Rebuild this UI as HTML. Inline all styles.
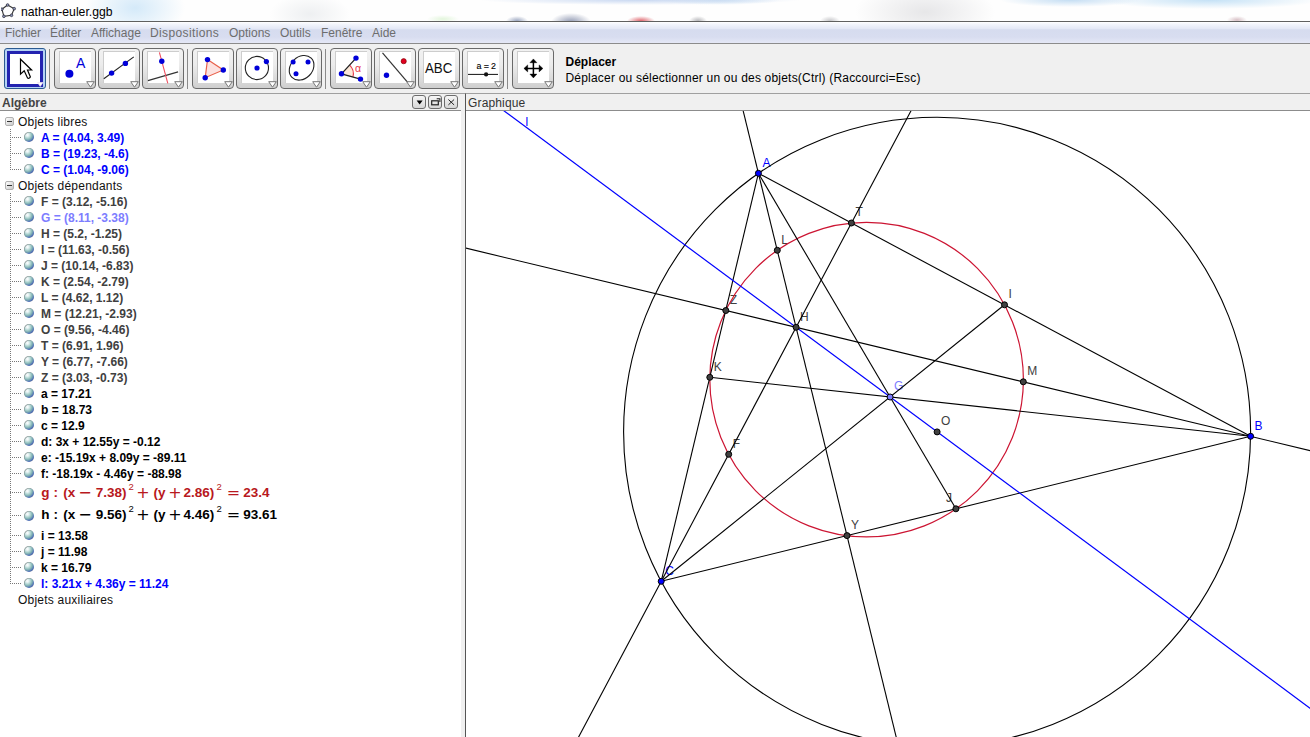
<!DOCTYPE html>
<html lang="fr"><head><meta charset="utf-8"><title>nathan-euler.ggb</title>
<style>
html,body{margin:0;padding:0}
body{width:1310px;height:737px;overflow:hidden;position:relative;background:#fff;font-family:"Liberation Sans",Arial,sans-serif;font-size:12px;color:#000}
div,span{box-sizing:border-box}
#title{position:absolute;left:0;top:0;width:1310px;height:21px;overflow:hidden;background:
radial-gradient(ellipse 11px 5px at 517px 21px,rgba(120,135,170,.75),transparent),
radial-gradient(ellipse 20px 9px at 571px 22px,rgba(125,135,165,.85),transparent),
radial-gradient(ellipse 14px 5px at 641px 21px,rgba(215,60,70,.8),transparent),
radial-gradient(ellipse 9px 5px at 698px 21px,rgba(150,150,155,.7),transparent),
radial-gradient(ellipse 10px 5px at 830px 21px,rgba(160,160,165,.6),transparent),
radial-gradient(ellipse 16px 4px at 443px 19px,rgba(215,242,205,.7),transparent),
radial-gradient(ellipse 10px 4px at 1237px 20px,rgba(190,150,160,.6),transparent),
radial-gradient(ellipse 160px 5px at 640px 0px,rgba(195,212,240,.9),transparent),
radial-gradient(ellipse 70px 7px at 1070px 0px,rgba(190,218,242,.9),transparent),
radial-gradient(ellipse 110px 9px at 1210px 0px,rgba(190,222,245,.9),transparent),
radial-gradient(ellipse 60px 5px at 720px 0px,rgba(190,218,242,.7),transparent),
radial-gradient(ellipse 50px 30px at 135px 8px,rgba(205,230,248,.85),transparent),
radial-gradient(ellipse 70px 30px at 925px 12px,rgba(228,228,230,.9),transparent),
radial-gradient(ellipse 40px 20px at 310px 14px,rgba(236,238,240,.9),transparent),
#fefefe}
#title span{position:absolute;left:21px;top:4.7px;font-size:12.2px;color:#000;line-height:15px}
#logo{position:absolute;left:1px;top:3px}
#menu{position:absolute;left:0;top:21px;width:1310px;height:23px;border-top:1px solid #606060;border-bottom:1px solid #8c8c8c;background:linear-gradient(#ffffff 0%,#f3f5fc 10%,#e4e8f6 31%,#d6dcef 37%,#d8ddf0 72%,#e5e8f6 100%)}
#menu span{position:absolute;top:4px;font-size:12px;line-height:15px;color:#6d6d6d}
#toolbar{position:absolute;left:0;top:44px;width:1310px;height:49px;background:#f0f0f0}
#tt1{position:absolute;left:565.5px;top:11px;font-weight:bold;font-size:12px;line-height:15px;color:#000}
#tt2{position:absolute;left:565.5px;top:27px;letter-spacing:0.2px;font-size:12px;line-height:15px;color:#000}
.tb{position:absolute;top:4px;width:42px;height:41px;border:1px solid #6a6a6a;border-radius:4px;background:linear-gradient(#f2f2f2 0%,#ececec 40%,#cfcfcf 100%)}
.tb .in{position:absolute;left:3.5px;top:2px;width:32.3px;height:32.3px;background:#fff;border-left:1px solid #cdcdcd;border-top:1px solid #cdcdcd}
.tb .ic{position:absolute;left:4px;top:3px}
.tb .tri{position:absolute;left:31px;top:31.5px}
.tb.sel{border:1px solid #2c5a90;border-radius:3px;background:#b4d2f4}
.tb.sel:before{content:"";position:absolute;left:1.6px;top:1.9px;width:36.6px;height:35.7px;background:#2323b0}
.tb.sel .tri{left:32.3px;top:32.6px;width:6.5px;height:5px}
.tb.sel .tri path{stroke:#f0e0ec}
.tb.sel .in{left:4.8px;top:4.8px;width:30.4px;height:30px;border:none;background:#fff}
.tsep{position:absolute;top:5px;width:1px;height:40px;background:#8a8a8a}
#hdrL{position:absolute;left:0;top:93px;width:461px;height:18px;border-top:1px solid #a0a0a0;border-bottom:1px solid #8c8c8c;background:#f0f0f0;font-size:12px;line-height:16px;color:#444;padding-left:2px}
#hdrL b{position:absolute;left:2px;top:1px}
#hdrR{position:absolute;left:466px;top:93px;width:844px;height:18px;letter-spacing:0.15px;border-top:1px solid #a0a0a0;border-bottom:1px solid #8c8c8c;background:#f0f0f0;font-size:12px;line-height:16px;color:#333;padding-left:2px;padding-top:1px}
.hb{position:absolute;top:1.2px;width:13.4px;height:13.4px;border:1px solid #6c6c6c;border-radius:3px;background:linear-gradient(#f6f6f6,#d6d6d6)}
.hb svg{position:absolute;left:-0.6px;top:-0.2px}
#split{position:absolute;left:461px;top:93px;width:5px;height:644px;background:#f0f0f0;border-right:1px solid #555;border-top:1px solid #a0a0a0}
#alg{position:absolute;left:0;top:0;width:461px;height:737px;overflow:hidden;pointer-events:none}
#gfx{position:absolute;left:466px;top:111px;width:844px;height:626px;background:#fff}
.cat{position:absolute;left:18px;height:16px;line-height:16px;letter-spacing:0.22px;margin-top:1px;font-size:12px;color:#111;white-space:nowrap}
.it{position:absolute;left:41px;height:16px;line-height:16px;margin-top:1px;font-size:12px;font-weight:bold;white-space:nowrap}
.mi{position:absolute;left:41px;font-family:"DejaVu Sans","Liberation Sans",sans-serif;font-size:12px;font-weight:bold;white-space:nowrap;letter-spacing:0.3px}
.mi sup{font-size:8px;vertical-align:6px;line-height:0}
.pm{position:absolute;left:5px;width:9px;height:9px;border:1px solid #b0b0b0;border-radius:2px;background:linear-gradient(135deg,#fff,#c8c8c8)}
.pm:after{content:"";position:absolute;left:1px;top:3px;width:5px;height:1px;background:#333}
.vd{position:absolute;left:10px;width:0;border-left:1px dotted #777}
.hd{position:absolute;left:10px;width:11px;height:0;border-top:1px dotted #777}
.ball{position:absolute;left:24px;width:10px;height:10px;border-radius:50%;background:radial-gradient(circle 7.5px at 34% 30%,#ffffff 0%,#e2f0f0 20%,#a2ccc8 48%,#78a8b0 68%,#4e6eb8 90%,#5a6a90 100%);box-shadow:inset 0.6px 0.6px 0 0 rgba(110,110,110,0.6)}

</style></head><body>
<div id="title"><svg id="logo" width="16" height="16" viewBox="0 0 16 16"><path d="M6.6 2L13.2 5.7L10.5 12.3L2.9 13.3L0.9 6.2Z" fill="none" stroke="#333" stroke-width="1.1"/><g fill="#8c94b4" stroke="#2a2a3a" stroke-width="0.7"><circle cx="6.6" cy="2" r="1.35"/><circle cx="13.2" cy="5.7" r="1.35"/><circle cx="10.5" cy="12.3" r="1.35"/><circle cx="2.9" cy="13.3" r="1.35"/><circle cx="0.9" cy="6.2" r="1.35"/></g></svg><span>nathan-euler.ggb</span></div>
<div id="menu"><span style="left:5px">Fichier</span><span style="left:50px">Éditer</span><span style="left:91px">Affichage</span><span style="left:150px;letter-spacing:0.38px">Dispositions</span><span style="left:229px">Options</span><span style="left:280px">Outils</span><span style="left:321px">Fenêtre</span><span style="left:372px">Aide</span></div>
<div id="toolbar">
<div class="tb sel" style="left:4px"><div class="in"></div><svg class="ic" width="32" height="32" viewBox="0 0 32 32"><path d="M11.5 7.2V22.2L15.2 18.8L18.5 25.9Q20 27 21.4 24.9L18.5 18H22.6Z" fill="#fff" stroke="#000" stroke-width="1.2" stroke-linejoin="miter"/></svg><svg class="tri" width="9" height="7" viewBox="0 0 9 7"><path d="M0.7 0.7H8.3L4.5 6.2Z" fill="#fff" stroke="#777" stroke-width="1"/></svg></div>
<div class="tb" style="left:54px"><div class="in"></div><svg class="ic" width="32" height="32" viewBox="0 0 32 32"><circle cx="10.4" cy="21.8" r="4" fill="#0000d8"/><text x="17" y="16.1" font-family="Liberation Sans, Arial, sans-serif" font-size="14" fill="#0000d8">A</text></svg><svg class="tri" width="9" height="7" viewBox="0 0 9 7"><path d="M0.7 0.7H8.3L4.5 6.2Z" fill="#fff" stroke="#777" stroke-width="1"/></svg></div>
<div class="tb" style="left:98px"><div class="in"></div><svg class="ic" width="32" height="32" viewBox="0 0 32 32"><path d="M0.8 26.8L30.8 4.9" stroke="#222" stroke-width="1.1"/><circle cx="8.6" cy="21.1" r="2.7" fill="#0000d8"/><circle cx="22.4" cy="11.4" r="2.7" fill="#0000d8"/></svg><svg class="tri" width="9" height="7" viewBox="0 0 9 7"><path d="M0.7 0.7H8.3L4.5 6.2Z" fill="#fff" stroke="#777" stroke-width="1"/></svg></div>
<div class="tb" style="left:142px"><div class="in"></div><svg class="ic" width="32" height="32" viewBox="0 0 32 32"><path d="M0.9 28.6L31.1 19.9" stroke="#333" stroke-width="1.1"/><path d="M12.4 0.4L20.8 31.3" stroke="#f05060" stroke-width="1.1"/><circle cx="14.8" cy="9.2" r="2.7" fill="#0000d8"/></svg><svg class="tri" width="9" height="7" viewBox="0 0 9 7"><path d="M0.7 0.7H8.3L4.5 6.2Z" fill="#fff" stroke="#777" stroke-width="1"/></svg></div>
<div class="tb" style="left:192px"><div class="in"></div><svg class="ic" width="32" height="32" viewBox="0 0 32 32"><path d="M10.5 7.6L26.3 18L8.2 25.7Z" fill="#fce2e0" stroke="#e8604a" stroke-width="1.15"/><circle cx="10.5" cy="7.6" r="2.7" fill="#0000d8"/><circle cx="26.3" cy="18" r="2.7" fill="#0000d8"/><circle cx="8.2" cy="25.7" r="2.7" fill="#0000d8"/></svg><svg class="tri" width="9" height="7" viewBox="0 0 9 7"><path d="M0.7 0.7H8.3L4.5 6.2Z" fill="#fff" stroke="#777" stroke-width="1"/></svg></div>
<div class="tb" style="left:236px"><div class="in"></div><svg class="ic" width="32" height="32" viewBox="0 0 32 32"><circle cx="15.9" cy="16" r="11.6" fill="none" stroke="#222" stroke-width="1.1"/><circle cx="16" cy="16" r="2.6" fill="#0000d8"/><circle cx="25.4" cy="9.6" r="2.6" fill="#0000d8"/></svg><svg class="tri" width="9" height="7" viewBox="0 0 9 7"><path d="M0.7 0.7H8.3L4.5 6.2Z" fill="#fff" stroke="#777" stroke-width="1"/></svg></div>
<div class="tb" style="left:280px"><div class="in"></div><svg class="ic" width="32" height="32" viewBox="0 0 32 32"><ellipse cx="16.6" cy="15.8" rx="13.6" ry="10.9" transform="rotate(-45 16.6 15.8)" fill="none" stroke="#222" stroke-width="1.1"/><circle cx="8.1" cy="9.9" r="2.5" fill="#0000d8"/><circle cx="23" cy="9.9" r="2.5" fill="#0000d8"/><circle cx="11" cy="21.8" r="2.5" fill="#0000d8"/></svg><svg class="tri" width="9" height="7" viewBox="0 0 9 7"><path d="M0.7 0.7H8.3L4.5 6.2Z" fill="#fff" stroke="#777" stroke-width="1"/></svg></div>
<div class="tb" style="left:330px"><div class="in"></div><svg class="ic" width="32" height="32" viewBox="0 0 32 32"><path d="M6.5 21.8L14.6 13.1A11.8 11.8 0 0 1 17.9 24.8Z" fill="#fde8d8" stroke="none"/><path d="M14.6 13.1A11.8 11.8 0 0 1 17.9 24.8" fill="none" stroke="#e83848" stroke-width="1.1"/><path d="M21 6.1L6.5 21.8L25.5 27.1" fill="none" stroke="#222" stroke-width="1.3"/><circle cx="21" cy="6.1" r="2.7" fill="#0000d8"/><circle cx="6.5" cy="21.8" r="2.7" fill="#0000d8"/><circle cx="25.5" cy="27.1" r="2.7" fill="#0000d8"/><text x="20" y="19.6" font-family="Liberation Sans, Arial, sans-serif" font-size="10.5" fill="#e83848">α</text></svg><svg class="tri" width="9" height="7" viewBox="0 0 9 7"><path d="M0.7 0.7H8.3L4.5 6.2Z" fill="#fff" stroke="#777" stroke-width="1"/></svg></div>
<div class="tb" style="left:374px"><div class="in"></div><svg class="ic" width="32" height="32" viewBox="0 0 32 32"><path d="M3.5 0.8L29.1 30.9" stroke="#333" stroke-width="1.2"/><circle cx="24.7" cy="9.2" r="2.6" fill="#e00020" stroke="#700" stroke-width="0.6"/><circle cx="7.5" cy="23.3" r="2.7" fill="#0000d8"/></svg><svg class="tri" width="9" height="7" viewBox="0 0 9 7"><path d="M0.7 0.7H8.3L4.5 6.2Z" fill="#fff" stroke="#777" stroke-width="1"/></svg></div>
<div class="tb" style="left:418px"><div class="in"></div><svg class="ic" width="32" height="32" viewBox="0 0 32 32"><text x="1.9" y="20.9" font-family="Liberation Sans, Arial, sans-serif" font-size="13.9" fill="#111" textLength="27.4" lengthAdjust="spacingAndGlyphs">ABC</text></svg><svg class="tri" width="9" height="7" viewBox="0 0 9 7"><path d="M0.7 0.7H8.3L4.5 6.2Z" fill="#fff" stroke="#777" stroke-width="1"/></svg></div>
<div class="tb" style="left:462px"><div class="in"></div><svg class="ic" width="32" height="32" viewBox="0 0 32 32"><g font-family="Liberation Sans, Arial, sans-serif" font-size="8.9" fill="#000" stroke="#000" stroke-width="0.12"><text x="9.4" y="16.8">a</text><text x="16.8" y="16.5">=</text><text x="24" y="16.8">2</text></g><path d="M1 22.4H31" stroke="#111" stroke-width="1"/><circle cx="19.1" cy="22.4" r="2.1" fill="#111"/></svg><svg class="tri" width="9" height="7" viewBox="0 0 9 7"><path d="M0.7 0.7H8.3L4.5 6.2Z" fill="#fff" stroke="#777" stroke-width="1"/></svg></div>
<div class="tb" style="left:512px"><div class="in"></div><svg class="ic" width="32" height="32" viewBox="0 0 32 32"><g stroke="#000" stroke-width="1.5" fill="#000"><path d="M16.4 9V24M9 16.4H24"/><path d="M16.4 6.9L12.9 10.7H19.9Z M16.4 25.9L12.9 22.1H19.9Z M6.9 16.4L10.7 12.9V19.9Z M25.9 16.4L22.1 12.9V19.9Z" stroke-width="0.4"/></g></svg><svg class="tri" width="9" height="7" viewBox="0 0 9 7"><path d="M0.7 0.7H8.3L4.5 6.2Z" fill="#fff" stroke="#777" stroke-width="1"/></svg></div>
<div class="tsep" style="left:49px"></div>
<div class="tsep" style="left:187px"></div>
<div class="tsep" style="left:325px"></div>
<div class="tsep" style="left:507px"></div>
<div id="tt1">Déplacer</div><div id="tt2">Déplacer ou sélectionner un ou des objets(Ctrl) (Raccourci=Esc)</div>
</div>
<div id="hdrL"><b>Algèbre</b>
<div class="hb" style="left:412.2px"><svg width="14" height="14" viewBox="0 0 14 14"><path d="M3.6 4.4H9.6L6.6 8.4Z" fill="#000"/></svg></div>
<div class="hb" style="left:428.3px"><svg width="14" height="14" viewBox="0 0 14 14"><path d="M7.7 2.7H10.9V5.9" fill="none" stroke="#222" stroke-width="1.1"/><rect x="2.7" y="4.8" width="6.6" height="4" fill="none" stroke="#222" stroke-width="1.2"/></svg></div>
<div class="hb" style="left:444.2px"><svg width="14" height="14" viewBox="0 0 14 14"><path d="M3.4 3.5L9.1 8.9M9.1 3.5L3.4 8.9" stroke="#222" stroke-width="1" fill="none"/></svg></div>
</div>
<div id="hdrR">Graphique</div>
<div id="alg">
<div class="pm" style="top:117px"></div><div class="cat" style="top:113px">Objets libres</div>
<div class="hd" style="top:137px"></div><div class="ball" style="top:132px"></div><div class="it" style="top:129px;color:#0000ff">A = (4.04, 3.49)</div>
<div class="hd" style="top:153px"></div><div class="ball" style="top:148px"></div><div class="it" style="top:145px;color:#0000ff">B = (19.23, -4.6)</div>
<div class="hd" style="top:169px"></div><div class="ball" style="top:164px"></div><div class="it" style="top:161px;color:#0000ff">C = (1.04, -9.06)</div>
<div class="vd" style="top:129px;height:41px"></div>
<div class="pm" style="top:181px"></div><div class="cat" style="top:177px">Objets dépendants</div>
<div class="hd" style="top:201px"></div><div class="ball" style="top:196px"></div><div class="it" style="top:193px;color:#404040">F = (3.12, -5.16)</div>
<div class="hd" style="top:217px"></div><div class="ball" style="top:212px"></div><div class="it" style="top:209px;color:#7d7dff">G = (8.11, -3.38)</div>
<div class="hd" style="top:233px"></div><div class="ball" style="top:228px"></div><div class="it" style="top:225px;color:#404040">H = (5.2, -1.25)</div>
<div class="hd" style="top:249px"></div><div class="ball" style="top:244px"></div><div class="it" style="top:241px;color:#404040">I = (11.63, -0.56)</div>
<div class="hd" style="top:265px"></div><div class="ball" style="top:260px"></div><div class="it" style="top:257px;color:#404040">J = (10.14, -6.83)</div>
<div class="hd" style="top:281px"></div><div class="ball" style="top:276px"></div><div class="it" style="top:273px;color:#404040">K = (2.54, -2.79)</div>
<div class="hd" style="top:297px"></div><div class="ball" style="top:292px"></div><div class="it" style="top:289px;color:#404040">L = (4.62, 1.12)</div>
<div class="hd" style="top:313px"></div><div class="ball" style="top:308px"></div><div class="it" style="top:305px;color:#404040">M = (12.21, -2.93)</div>
<div class="hd" style="top:329px"></div><div class="ball" style="top:324px"></div><div class="it" style="top:321px;color:#404040">O = (9.56, -4.46)</div>
<div class="hd" style="top:345px"></div><div class="ball" style="top:340px"></div><div class="it" style="top:337px;color:#404040">T = (6.91, 1.96)</div>
<div class="hd" style="top:361px"></div><div class="ball" style="top:356px"></div><div class="it" style="top:353px;color:#404040">Y = (6.77, -7.66)</div>
<div class="hd" style="top:377px"></div><div class="ball" style="top:372px"></div><div class="it" style="top:369px;color:#404040">Z = (3.03, -0.73)</div>
<div class="hd" style="top:393px"></div><div class="ball" style="top:388px"></div><div class="it" style="top:385px;color:#000">a = 17.21</div>
<div class="hd" style="top:409px"></div><div class="ball" style="top:404px"></div><div class="it" style="top:401px;color:#000">b = 18.73</div>
<div class="hd" style="top:425px"></div><div class="ball" style="top:420px"></div><div class="it" style="top:417px;color:#000">c = 12.9</div>
<div class="hd" style="top:441px"></div><div class="ball" style="top:436px"></div><div class="it" style="top:433px;color:#000">d: 3x + 12.55y = -0.12</div>
<div class="hd" style="top:457px"></div><div class="ball" style="top:452px"></div><div class="it" style="top:449px;color:#000">e: -15.19x + 8.09y = -89.11</div>
<div class="hd" style="top:473px"></div><div class="ball" style="top:468px"></div><div class="it" style="top:465px;color:#000">f: -18.19x - 4.46y = -88.98</div>
<div class="hd" style="top:492px"></div><div class="ball" style="top:487.5px"></div><span style="position:absolute;left:41.2px;top:482.8px;white-space:nowrap;color:#b81820;font:bold 13.5px 'Liberation Sans',Arial,sans-serif;line-height:20px">g</span><span style="position:absolute;left:53.4px;top:482.8px;white-space:nowrap;color:#b81820;font:bold 13.5px 'Liberation Sans',Arial,sans-serif;line-height:20px">:</span><span style="position:absolute;left:63.3px;top:482.8px;white-space:nowrap;color:#b81820;font:bold 13.5px 'Liberation Sans',Arial,sans-serif;line-height:20px">(x</span><span style="position:absolute;left:78.3px;top:482.9px;white-space:nowrap;color:#b81820;font:16px 'DejaVu Sans',sans-serif;line-height:20px">&minus;</span><span style="position:absolute;left:95.8px;top:482.8px;white-space:nowrap;color:#b81820;font:bold 13.5px 'Liberation Sans',Arial,sans-serif;line-height:20px">7.38)</span><span style="position:absolute;left:128.6px;top:476.6px;white-space:nowrap;color:#b81820;font:9.5px 'Liberation Sans',Arial,sans-serif;line-height:20px">2</span><span style="position:absolute;left:136.2px;top:482.9px;white-space:nowrap;color:#b81820;font:16px 'DejaVu Sans',sans-serif;line-height:20px">+</span><span style="position:absolute;left:153.4px;top:482.8px;white-space:nowrap;color:#b81820;font:bold 13.5px 'Liberation Sans',Arial,sans-serif;line-height:20px">(y</span><span style="position:absolute;left:168.3px;top:482.9px;white-space:nowrap;color:#b81820;font:16px 'DejaVu Sans',sans-serif;line-height:20px">+</span><span style="position:absolute;left:183.4px;top:482.8px;white-space:nowrap;color:#b81820;font:bold 13.5px 'Liberation Sans',Arial,sans-serif;line-height:20px">2.86)</span><span style="position:absolute;left:216.4px;top:476.6px;white-space:nowrap;color:#b81820;font:9.5px 'Liberation Sans',Arial,sans-serif;line-height:20px">2</span><span style="position:absolute;left:226.7px;top:482.9px;white-space:nowrap;color:#b81820;font:16px 'DejaVu Sans',sans-serif;line-height:20px">=</span><span style="position:absolute;left:243.2px;top:482.8px;white-space:nowrap;color:#b81820;font:bold 13.5px 'Liberation Sans',Arial,sans-serif;line-height:20px">23.4</span>
<div class="hd" style="top:515px"></div><div class="ball" style="top:510.5px"></div><span style="position:absolute;left:41.2px;top:505.0px;white-space:nowrap;color:#000;font:bold 13.5px 'Liberation Sans',Arial,sans-serif;line-height:20px">h</span><span style="position:absolute;left:53.4px;top:505.0px;white-space:nowrap;color:#000;font:bold 13.5px 'Liberation Sans',Arial,sans-serif;line-height:20px">:</span><span style="position:absolute;left:63.3px;top:505.0px;white-space:nowrap;color:#000;font:bold 13.5px 'Liberation Sans',Arial,sans-serif;line-height:20px">(x</span><span style="position:absolute;left:78.3px;top:505.1px;white-space:nowrap;color:#000;font:16px 'DejaVu Sans',sans-serif;line-height:20px">&minus;</span><span style="position:absolute;left:95.8px;top:505.0px;white-space:nowrap;color:#000;font:bold 13.5px 'Liberation Sans',Arial,sans-serif;line-height:20px">9.56)</span><span style="position:absolute;left:128.6px;top:498.8px;white-space:nowrap;color:#000;font:9.5px 'Liberation Sans',Arial,sans-serif;line-height:20px">2</span><span style="position:absolute;left:136.2px;top:505.1px;white-space:nowrap;color:#000;font:16px 'DejaVu Sans',sans-serif;line-height:20px">+</span><span style="position:absolute;left:153.4px;top:505.0px;white-space:nowrap;color:#000;font:bold 13.5px 'Liberation Sans',Arial,sans-serif;line-height:20px">(y</span><span style="position:absolute;left:168.3px;top:505.1px;white-space:nowrap;color:#000;font:16px 'DejaVu Sans',sans-serif;line-height:20px">+</span><span style="position:absolute;left:183.4px;top:505.0px;white-space:nowrap;color:#000;font:bold 13.5px 'Liberation Sans',Arial,sans-serif;line-height:20px">4.46)</span><span style="position:absolute;left:216.4px;top:498.8px;white-space:nowrap;color:#000;font:9.5px 'Liberation Sans',Arial,sans-serif;line-height:20px">2</span><span style="position:absolute;left:226.7px;top:505.1px;white-space:nowrap;color:#000;font:16px 'DejaVu Sans',sans-serif;line-height:20px">=</span><span style="position:absolute;left:243.2px;top:505.0px;white-space:nowrap;color:#000;font:bold 13.5px 'Liberation Sans',Arial,sans-serif;line-height:20px">93.61</span>
<div class="hd" style="top:535px"></div><div class="ball" style="top:530px"></div><div class="it" style="top:527px;color:#000">i = 13.58</div>
<div class="hd" style="top:551px"></div><div class="ball" style="top:546px"></div><div class="it" style="top:543px;color:#000">j = 11.98</div>
<div class="hd" style="top:567px"></div><div class="ball" style="top:562px"></div><div class="it" style="top:559px;color:#000">k = 16.79</div>
<div class="hd" style="top:583px"></div><div class="ball" style="top:578px"></div><div class="it" style="top:575px;color:#0000ff">l: 3.21x + 4.36y = 11.24</div>
<div class="vd" style="top:193px;height:391px"></div>
<div class="cat" style="top:591px">Objets auxiliaires</div>
</div>
<div id="split"></div>
<div id="gfx"></div>
<svg width="844" height="626" viewBox="466 111 844 626" style="position:absolute;left:466px;top:111px"><g font-family="Liberation Sans, Arial, sans-serif" font-size="12"><text x="762.4" y="166.6" fill="#0000ff">A</text><text x="1254.6" y="429.6" fill="#0000ff">B</text><text x="665.2" y="574.6" fill="#0000ff">C</text><text x="941.1" y="425.2" fill="#404040">O</text><text x="894.1" y="390.3" fill="#7d7dff">G</text><text x="800.1" y="320.6" fill="#404040">H</text><text x="1008.5" y="298.1" fill="#404040">I</text><text x="946.1" y="502.0" fill="#404040">J</text><text x="713.8" y="370.6" fill="#404040">K</text><text x="781.3" y="243.6" fill="#404040">L</text><text x="1027.3" y="375.1" fill="#404040">M</text><text x="732.7" y="447.6" fill="#404040">F</text><text x="855.4" y="216.3" fill="#404040">T</text><text x="851.0" y="528.9" fill="#404040">Y</text><text x="729.8" y="303.8" fill="#404040">Z</text><text x="525.5" y="126" fill="#0000ff">l</text></g>
<ellipse cx="937.1" cy="431.9" rx="313.5" ry="314.6" fill="none" stroke="#000" stroke-width="1.1"/>
<ellipse cx="866.6" cy="379.6" rx="156.8" ry="157.3" fill="none" stroke="#cc1432" stroke-width="1.2"/>
<line x1="758.4" y1="173.3" x2="1250.6" y2="436.3" stroke="#000" stroke-width="1.1"/>
<line x1="1250.6" y1="436.3" x2="661.2" y2="581.3" stroke="#000" stroke-width="1.1"/>
<line x1="758.4" y1="173.3" x2="661.2" y2="581.3" stroke="#000" stroke-width="1.1"/>
<line x1="758.4" y1="173.3" x2="955.9" y2="508.8" stroke="#000" stroke-width="1.1"/>
<line x1="1250.6" y1="436.3" x2="709.8" y2="377.3" stroke="#000" stroke-width="1.1"/>
<line x1="661.2" y1="581.3" x2="1004.5" y2="304.8" stroke="#000" stroke-width="1.1"/>
<line x1="283.7" y1="-1769.5" x2="1233.2" y2="2116.2" stroke="#000" stroke-width="1.1"/>
<line x1="3195.4" y1="902.8" x2="-694.2" y2="-30.1" stroke="#000" stroke-width="1.1"/>
<line x1="-276.4" y1="2347.9" x2="1598.9" y2="-1185.2" stroke="#000" stroke-width="1.1"/>
<line x1="-810.7" y1="-863.5" x2="2402.9" y2="1518.2" stroke="#0000ff" stroke-width="1.2"/>
<circle cx="758.4" cy="173.3" r="3" fill="#0000ff" stroke="#000" stroke-width="1"/>
<circle cx="1250.6" cy="436.3" r="3" fill="#0000ff" stroke="#000" stroke-width="1"/>
<circle cx="661.2" cy="581.3" r="3" fill="#0000ff" stroke="#000" stroke-width="1"/>
<circle cx="937.1" cy="431.9" r="3" fill="#404040" stroke="#000" stroke-width="1"/>
<circle cx="890.1" cy="397.0" r="3" fill="#7d7dff" stroke="#000" stroke-width="1"/>
<circle cx="796.1" cy="327.3" r="3" fill="#404040" stroke="#000" stroke-width="1"/>
<circle cx="1004.5" cy="304.8" r="3" fill="#404040" stroke="#000" stroke-width="1"/>
<circle cx="955.9" cy="508.8" r="3" fill="#404040" stroke="#000" stroke-width="1"/>
<circle cx="709.8" cy="377.3" r="3" fill="#404040" stroke="#000" stroke-width="1"/>
<circle cx="777.3" cy="250.3" r="3" fill="#404040" stroke="#000" stroke-width="1"/>
<circle cx="1023.3" cy="381.8" r="3" fill="#404040" stroke="#000" stroke-width="1"/>
<circle cx="728.7" cy="454.3" r="3" fill="#404040" stroke="#000" stroke-width="1"/>
<circle cx="851.4" cy="223.0" r="3" fill="#404040" stroke="#000" stroke-width="1"/>
<circle cx="847.0" cy="535.6" r="3" fill="#404040" stroke="#000" stroke-width="1"/>
<circle cx="725.8" cy="310.5" r="3" fill="#404040" stroke="#000" stroke-width="1"/></svg>
</body></html>
